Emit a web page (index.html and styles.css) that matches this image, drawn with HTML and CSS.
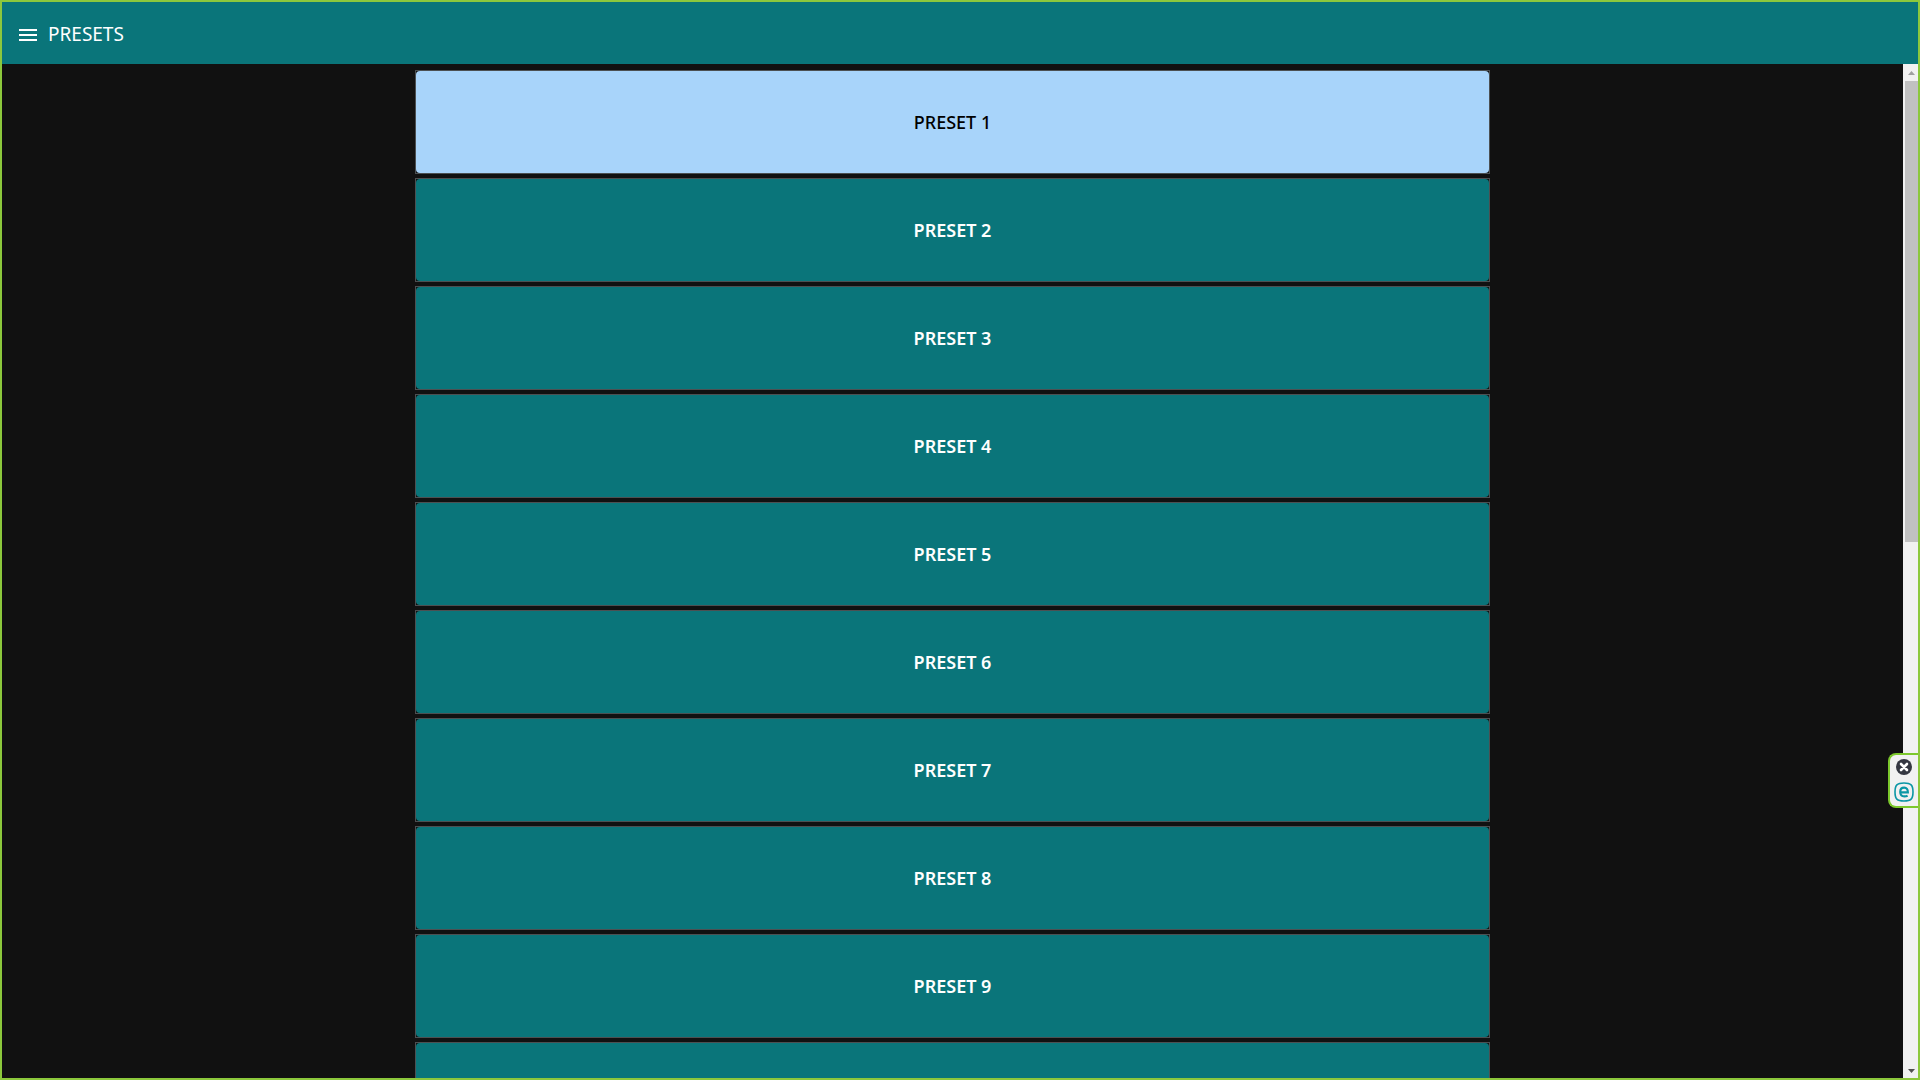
FILE: index.html
```html
<!DOCTYPE html>
<html lang="en">
<head>
<meta charset="utf-8">
<meta name="viewport" content="width=device-width, initial-scale=1">
<title>Presets</title>
<link rel="stylesheet" href="styles.css">
</head>
<body>
<div class="app">
  <header class="topbar">
    <button class="menu" type="button" aria-label="Menu">
      <svg width="18" height="12" viewBox="0 0 18 12" fill="#fff" shape-rendering="crispEdges"><path d="M0 0h18v2H0zM0 5h18v2H0zM0 10h18v2H0z"/></svg>
    </button>
    <h1 class="title">PRESETS</h1>
  </header>
  <div class="body">
    <main class="content">
      <div class="list">
        <div class="cell"><button class="preset active" type="button">PRESET 1</button></div>
        <div class="cell"><button class="preset" type="button">PRESET 2</button></div>
        <div class="cell"><button class="preset" type="button">PRESET 3</button></div>
        <div class="cell"><button class="preset" type="button">PRESET 4</button></div>
        <div class="cell"><button class="preset" type="button">PRESET 5</button></div>
        <div class="cell"><button class="preset" type="button">PRESET 6</button></div>
        <div class="cell"><button class="preset" type="button">PRESET 7</button></div>
        <div class="cell"><button class="preset" type="button">PRESET 8</button></div>
        <div class="cell"><button class="preset" type="button">PRESET 9</button></div>
        <div class="cell"><button class="preset" type="button" aria-label="Preset 10"></button></div>
      </div>
    </main>
    <div class="scrollbar" aria-hidden="true">
      <svg class="arrow" width="15" height="17" viewBox="0 0 15 17"><path d="M5 11h7L8.500 7z" fill="#a0a0a0"/></svg>
      <div class="track"><div class="thumb"></div></div>
      <svg class="arrow" width="15" height="17" viewBox="0 0 15 17"><path d="M5 8h7l-3.500 4z" fill="#505050"/></svg>
    </div>
  </div>
  <aside class="widget">
    <button class="widget-button" type="button" aria-label="Close">
      <svg width="16" height="16" viewBox="0 0 16 16"><circle cx="8" cy="8" r="8" fill="#343741"/><path d="M5 5l6 6M11 5l-6 6" stroke="#fff" stroke-width="2.600" stroke-linecap="round"/></svg>
    </button>
    <button class="widget-button" type="button" aria-label="Protected browser">
      <svg width="20" height="20" viewBox="0 0 20 20" fill="none" stroke="#0a96a5"><path d="M10 1C17 1 19 3 19 10S17 19 10 19 1 17 1 10 3 1 10 1z" stroke-width="1.600"/><path d="M6.300 10.400h7.600C13.900 7.200 12.600 5.600 10.200 5.600 7.600 5.600 6.200 7.300 6.200 10s1.500 4.400 4.200 4.400c1.300 0 2.200-.2 3.200-.7" stroke-width="2.100"/></svg>
    </button>
  </aside>
</div>
</body>
</html>
```
FILE: styles.css
```css
* {
  box-sizing: border-box;
}

body {
  margin: 0;
  background: #111;
  font-family: "Noto Sans", "Open Sans", sans-serif;
}

button {
  margin: 0;
  padding: 0;
  border: 0;
  background: none;
  font: inherit;
  cursor: pointer;
}

.app {
  position: relative;
  display: flex;
  flex-direction: column;
  height: 100vh;
  border: 2px solid #8cc83c;
  overflow: hidden;
}

.topbar {
  display: flex;
  flex: none;
  align-items: center;
  gap: 11px;
  height: 62px;
  padding: 2px 17px 0;
  background: #0a757a;
  color: #fff;
}

.menu {
  display: flex;
  padding-top: 2px;
}

.title {
  margin: 0;
  font-size: 19px;
  font-weight: 400;
  line-height: 24px;
}

.body {
  display: flex;
  flex: 1;
  min-height: 0;
}

.content {
  flex: 1;
  padding-top: 6px;
  overflow: hidden;
}

.list {
  display: flex;
  flex-direction: column;
  gap: 4px;
  width: 56.6%;
  margin: 0 auto;
}

.cell {
  display: flex;
  height: 104px;
  border: 1px solid #4c5052;
}

.preset {
  flex: 1;
  border-radius: 4px;
  background: #0a757a;
  color: #fff;
  font-size: 18px;
  font-weight: 600;
  line-height: 24px;
}

.preset.active {
  background: #a8d4fa;
  color: #000;
  font-weight: 500;
}

.scrollbar {
  display: flex;
  flex: none;
  flex-direction: column;
  width: 15px;
  background: #f1f1f1;
}

.arrow {
  flex: none;
}

.track {
  flex: 1;
  padding-left: 2px;
}

.thumb {
  height: 47%;
  background: #c1c1c1;
}

.widget {
  position: absolute;
  right: 0;
  bottom: 270px;
  display: flex;
  flex-direction: column;
  align-items: center;
  gap: 7px;
  width: 30px;
  padding: 4px 0;
  border: 2px solid #7cc82c;
  border-right: 0;
  border-radius: 8px 0 0 8px;
  background: #f1f1f1;
}

.widget-button {
  display: flex;
}
```
